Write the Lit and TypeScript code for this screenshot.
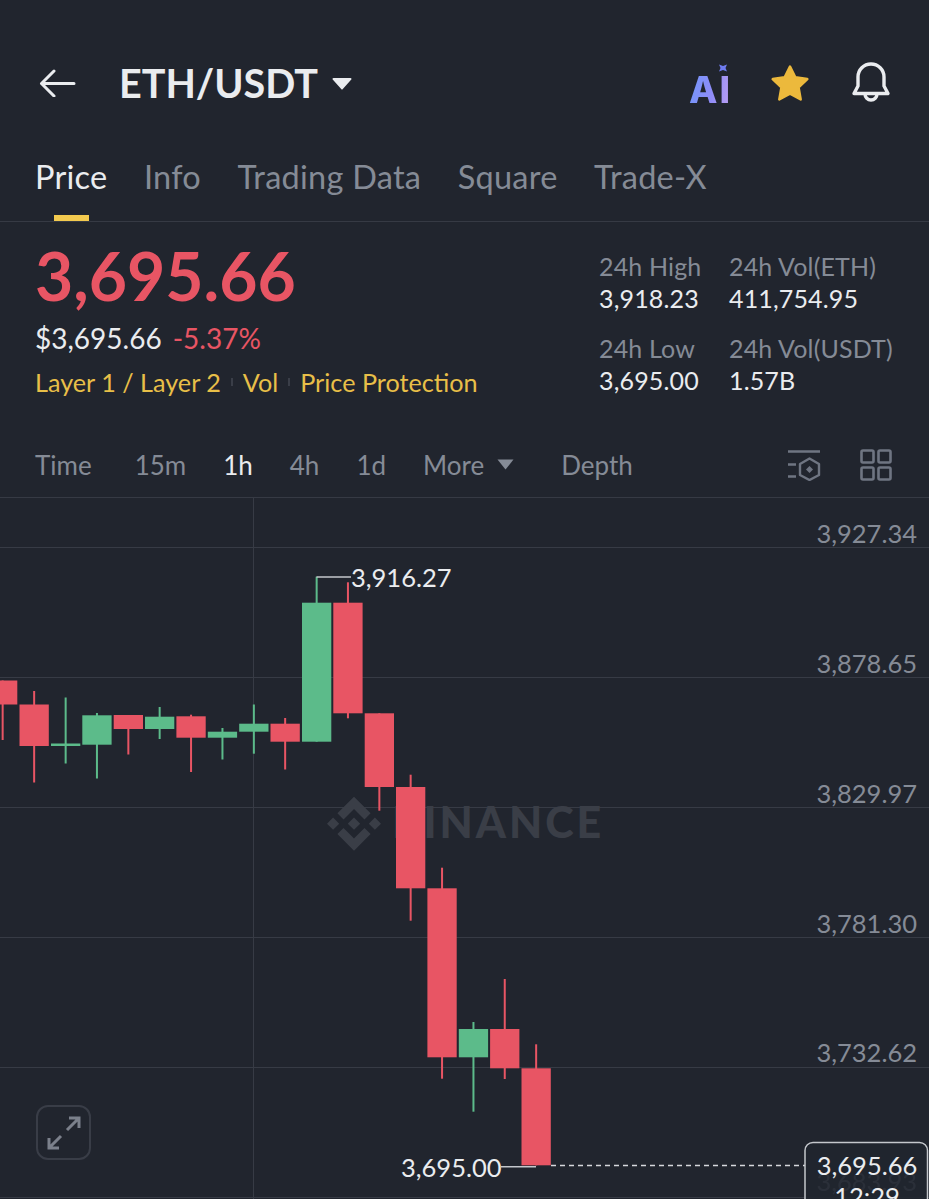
import { LitElement, html, svg, css } from 'lit'
import { customElement } from 'lit/decorators.js'

const TABS = ['Price', 'Info', 'Trading Data', 'Square', 'Trade-X']

const STATS = [
  ['24h High', '3,918.23', '24h Vol(ETH)', '411,754.95'],
  ['24h Low', '3,695.00', '24h Vol(USDT)', '1.57B'],
]

const RED = '#e85564'
const GREEN = '#5cbb8a'

/** Candles: left edge, body top, body bottom, wick top, wick bottom, in page pixels. */
const CANDLES: [number, number, number, number, number, string][] = [
  [-12, 680.5, 704.5, 680.5, 740, RED],
  [19.5, 704.5, 746, 691, 782.5, RED],
  [51, 743.5, 746, 697.5, 763.5, GREEN],
  [82.3, 715.3, 744.7, 713, 778.5, GREEN],
  [113.7, 715, 729, 715, 754.5, RED],
  [145, 716.7, 729, 707, 739, GREEN],
  [176.4, 716.3, 737.7, 714.7, 772, RED],
  [207.8, 731.7, 737.7, 728, 759.5, GREEN],
  [239.2, 723.7, 731.7, 704.5, 753.7, GREEN],
  [270.5, 723.7, 741.7, 718, 769.5, RED],
  [302, 602.7, 741.7, 576.7, 741.7, GREEN],
  [333.3, 602.7, 713.3, 582.3, 718.3, RED],
  [364.7, 713.3, 787, 713.3, 810.7, RED],
  [396, 787, 888.3, 774.7, 920.7, RED],
  [427.4, 888.3, 1057.3, 867.7, 1078.7, RED],
  [458.8, 1029, 1057.3, 1022, 1111.7, GREEN],
  [490.1, 1029, 1068.3, 979, 1079, RED],
  [521.5, 1068.3, 1165.3, 1044.3, 1165.3, RED],
]

const GRID_Y = [547.5, 677.5, 807.5, 937.5, 1067.5, 1197.5]

const AXIS: [string, number][] = [
  ['3,927.34', 543],
  ['3,878.65', 673],
  ['3,829.97', 803],
  ['3,781.30', 933],
  ['3,732.62', 1062],
]

@customElement('app-root')
export class AppRoot extends LitElement {
  static styles = css`
    :host {
      display: block;
      width: 929px;
      height: 1199px;
      overflow: hidden;
      background: #21252e;
      color: #eaecef;
      font-family: Lato, 'Open Sans', sans-serif;
    }
    .header {
      display: flex;
      align-items: center;
      height: 48px;
      padding: 59px 38px 33px 38px;
    }
    .title {
      margin-left: 43px;
      font-size: 39.5px;
      font-weight: 700;
      line-height: 48px;
    }
    .title-caret {
      margin-left: 14px;
    }
    .spacer {
      flex: 1;
    }
    .ai {
      position: relative;
      width: 40px;
      height: 40px;
      margin-right: 41px;
      font: 800 37px/54px Inter, sans-serif;
      letter-spacing: 2px;
      background: linear-gradient(100deg, #6f97fb, #8f8cf8 60%, #b79df2);
      -webkit-background-clip: text;
      background-clip: text;
      color: transparent;
    }
    .ai svg {
      position: absolute;
      left: 29px;
      top: 0;
    }
    .star {
      margin-right: 41px;
    }
    .tabs {
      display: flex;
      gap: 36.5px;
      height: 81px;
      padding: 0 35px;
      border-bottom: 1px solid #363a44;
      font-size: 32.5px;
      letter-spacing: 0.25px;
      color: #858b96;
    }
    .tab {
      position: relative;
      line-height: 74px;
    }
    .tab.active {
      color: #eaecef;
    }
    .tab.active::after {
      content: '';
      position: absolute;
      left: 19px;
      bottom: 0;
      width: 35px;
      height: 6px;
      background: #f3ca4f;
    }
    .summary {
      display: flex;
      justify-content: space-between;
      height: 198px;
      padding: 0 36px 0 35px;
    }
    .price {
      margin-top: 18px;
      font-size: 66px;
      font-weight: 700;
      line-height: 72px;
      color: #e85564;
    }
    .fiat {
      display: flex;
      gap: 11px;
      margin-top: 8px;
      font-size: 28px;
      line-height: 36px;
    }
    .change {
      color: #e85564;
    }
    .tags {
      display: flex;
      align-items: center;
      gap: 10px;
      margin-top: 8px;
      font-size: 25.2px;
      line-height: 36px;
      color: #e8bf48;
    }
    .tag-sep {
      width: 2px;
      height: 8px;
      background: #3a3e48;
    }
    .stats {
      display: grid;
      grid-template-columns: 130px 164px;
      row-gap: 18px;
      align-content: start;
      margin-top: 28px;
    }
    .stat {
      font-size: 25px;
      line-height: 32px;
      white-space: nowrap;
      letter-spacing: 0.15px;
    }
    .stat span {
      display: block;
      color: #858b96;
    }
    .intervals {
      display: flex;
      align-items: center;
      height: 65px;
      padding: 12px 37px 0 35px;
      font-size: 26px;
      color: #858b96;
      border-bottom: 1px solid #363a44;
    }
    .intervals > span {
      margin-right: 37px;
    }
    .intervals > span:first-child {
      margin-right: 43px;
    }
    .intervals .on {
      color: #eaecef;
    }
    .more {
      display: flex;
      align-items: center;
      gap: 13px;
      margin-right: 47px;
    }
    .tool {
      margin-left: 39px;
    }
    .chart {
      position: relative;
      height: 701px;
      overflow: hidden;
    }
    .chart svg.plot {
      display: block;
      font-family: Lato, 'Open Sans', sans-serif;
    }
    .expand {
      position: absolute;
      left: 36px;
      top: 607px;
      width: 51px;
      height: 51px;
      border: 2px solid #393d47;
      border-radius: 12px;
      display: flex;
      align-items: center;
      justify-content: center;
    }
  `

  private renderPlot() {
    const w = 29.3
    return html`<svg class="plot" width="929" height="701" viewBox="0 498 929 701">
      ${GRID_Y.map((y) => svg`<line x1="0" x2="929" y1=${y} y2=${y} stroke="#373b45" />`)}
      <line x1="253.5" x2="253.5" y1="498" y2="1199" stroke="#373b45" />

      <g fill="#3a3e47">
        <path
          transform="translate(327 796.7) scale(0.4265)"
          d="M38.73 53.2l24.59-24.58 24.6 24.6 14.3-14.31L63.32 0 24.42 38.9zM0 63.31l14.3-14.31 14.31 14.31-14.31 14.3zM38.73 73.41l24.59 24.59 24.6-24.6 14.31 14.29-38.9 38.91-38.91-38.88v-.03zM98 63.31l14.3-14.31 14.31 14.3-14.31 14.32zM77.83 63.3L63.32 48.78 52.59 59.51l-1.24 1.23-2.54 2.54 14.51 14.5 14.51-14.47z"
        />
        <text x="392" y="838" font-size="43" font-weight="900" letter-spacing="3">BINANCE</text>
      </g>

      ${CANDLES.map(
        ([x, top, bottom, wickTop, wickBottom, color]) => svg`
          <rect x=${x + w / 2 - 1} y=${wickTop} width="2" height=${wickBottom - wickTop} fill=${color} />
          <rect x=${x} y=${top} width=${w} height=${bottom - top} fill=${color} />
        `,
      )}

      <g font-size="25.5" fill="#858b96" text-anchor="end">
        ${AXIS.map(([label, y]) => svg`<text x="917" y=${y}>${label}</text>`)}
        <text x="917" y="1191" opacity="0.7">3,683.93</text>
      </g>

      <path d="M316.5 577H351" stroke="#c4c7cc" stroke-width="1.5" fill="none" />
      <text x="351" y="586.5" font-size="25.5" fill="#eaecef">3,916.27</text>
      <path d="M501 1166.8H536" stroke="#c4c7cc" stroke-width="1.5" fill="none" />
      <text x="401" y="1176.5" font-size="25.5" fill="#eaecef">3,695.00</text>
      <line x1="551" x2="805" y1="1165.5" y2="1165.5" stroke="#d6d8dc" stroke-width="1.3" stroke-dasharray="5 4" />

      <rect x="805" y="1142.5" width="122.5" height="80" rx="8" fill="#21252e" fill-opacity="0.86" stroke="#c4c7cc" stroke-width="1.5" />
      <g font-size="25.5" fill="#eaecef" text-anchor="middle">
        <text x="867" y="1175">3,695.66</text>
        <text x="867" y="1206">12:29</text>
      </g>
    </svg>`
  }

  render() {
    return html`
      <div class="header">
        <svg width="38" height="28" viewBox="0 0 38 28" fill="none" stroke="#eaecef" stroke-width="3" stroke-linecap="round" stroke-linejoin="round">
          <path d="M3.5 14.5H36M16 2L3.5 14.5L16 27" />
        </svg>
        <div class="title">ETH/USDT</div>
        <svg class="title-caret" width="20" height="13" viewBox="0 0 20 13">
          <path d="M1.5 1H18.5a1 1 0 0 1 .8 1.6L10.8 12a1 1 0 0 1-1.6 0L.7 2.6A1 1 0 0 1 1.5 1Z" fill="#eaecef" />
        </svg>
        <div class="spacer"></div>
        <div class="ai">
          AI
          <svg width="10" height="10" viewBox="0 0 10 10">
            <path d="M1 1.5 5 3 9 1.5 7.5 5 9 8.5 5 7 1 8.5 2.5 5Z" fill="#6f7cf0" />
          </svg>
        </div>
        <svg class="star" width="40" height="38" viewBox="0 0 40 38">
          <path
            d="M20 2.5 25.3 13.3 37.3 15 28.6 23.4 30.7 35.4 20 29.7 9.3 35.4 11.4 23.4 2.7 15 14.7 13.3Z"
            fill="#ecb93c"
            stroke="#ecb93c"
            stroke-width="2.5"
            stroke-linejoin="round"
          />
        </svg>
        <svg width="40" height="42" viewBox="0 0 40 42" fill="none" stroke="#eaecef" stroke-width="3.4" stroke-linejoin="round" stroke-linecap="round">
          <path d="M7 24V15A13 13 0 0 1 33 15V24L37 31.5H3Z" />
          <path d="M14 32A6 6 0 0 0 26 32" />
        </svg>
      </div>

      <div class="tabs">
        ${TABS.map((t, i) => html`<div class="tab ${i === 0 ? 'active' : ''}">${t}</div>`)}
      </div>

      <div class="summary">
        <div>
          <div class="price">3,695.66</div>
          <div class="fiat"><span>$3,695.66</span><span class="change">-5.37%</span></div>
          <div class="tags">
            <span>Layer 1 / Layer 2</span><i class="tag-sep"></i><span>Vol</span><i class="tag-sep"></i><span>Price Protection</span>
          </div>
        </div>
        <div class="stats">
          ${STATS.map(
            ([a, av, b, bv]) => html`
              <div class="stat"><span>${a}</span>${av}</div>
              <div class="stat"><span>${b}</span>${bv}</div>
            `,
          )}
        </div>
      </div>

      <div class="intervals">
        <span>Time</span><span>15m</span><span class="on">1h</span><span>4h</span><span>1d</span>
        <div class="more">
          More
          <svg width="17" height="11" viewBox="0 0 17 11"><path d="M0.5 0.5H16.5L8.5 10.5Z" fill="#858b96" /></svg>
        </div>
        <span>Depth</span>
        <div class="spacer"></div>
        <svg width="34" height="32" viewBox="0 0 34 32" fill="none" stroke="#6f7582" stroke-width="2.4">
          <path d="M1 2.5H33M1 15.5H9M1 27.5H9" />
          <path d="M22.5 9.5 32 15V26L22.5 31 13 26V15Z" stroke-linejoin="round" />
          <path d="M22.5 17 26 20.5 22.5 24 19 20.5Z" fill="#6f7582" stroke="none" />
        </svg>
        <svg class="tool" width="32" height="32" viewBox="0 0 32 32" fill="none" stroke="#6f7582" stroke-width="2.6">
          <rect x="1.5" y="1.5" width="12" height="12" rx="1.5" />
          <rect x="18.5" y="1.5" width="12" height="12" rx="1.5" />
          <rect x="1.5" y="18.5" width="12" height="12" rx="1.5" />
          <rect x="18.5" y="18.5" width="12" height="12" rx="1.5" />
        </svg>
      </div>

      <div class="chart">
        ${this.renderPlot()}
        <div class="expand">
          <svg width="34" height="34" viewBox="0 0 34 34" fill="none" stroke="#7b808b" stroke-width="3">
            <path d="M20 14 32 2M22 2H32V12M14 20 2 32M2 22V32H12" />
          </svg>
        </div>
      </div>
    `
  }
}
